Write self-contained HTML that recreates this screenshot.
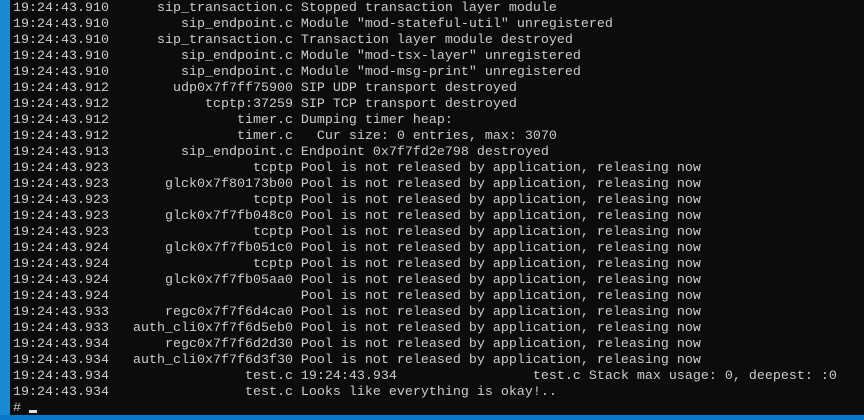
<!DOCTYPE html>
<html><head><meta charset="utf-8"><style>
html,body{margin:0;padding:0;background:#0c0c0c;width:864px;height:420px;overflow:hidden;position:relative}
pre{position:absolute;left:13px;top:1px;margin:0;font-family:"Liberation Mono",monospace;font-size:13.33px;line-height:16px;color:#cccccc;white-space:pre}
.l{position:absolute;left:0;top:0;width:10px;height:420px;background:#1a8ad4}
.b{position:absolute;left:0;top:415px;width:864px;height:5px;background:#0a78c8}
.c{position:absolute;left:29px;top:410px;width:8px;height:3px;background:#e0e0e0}
</style></head><body>
<div class="l"></div>
<pre>19:24:43.910      sip_transaction.c Stopped transaction layer module
19:24:43.910         sip_endpoint.c Module "mod-stateful-util" unregistered
19:24:43.910      sip_transaction.c Transaction layer module destroyed
19:24:43.910         sip_endpoint.c Module "mod-tsx-layer" unregistered
19:24:43.910         sip_endpoint.c Module "mod-msg-print" unregistered
19:24:43.912        udp0x7f7ff75900 SIP UDP transport destroyed
19:24:43.912            tcptp:37259 SIP TCP transport destroyed
19:24:43.912                timer.c Dumping timer heap:
19:24:43.912                timer.c   Cur size: 0 entries, max: 3070
19:24:43.913         sip_endpoint.c Endpoint 0x7f7fd2e798 destroyed
19:24:43.923                  tcptp Pool is not released by application, releasing now
19:24:43.923       glck0x7f80173b00 Pool is not released by application, releasing now
19:24:43.923                  tcptp Pool is not released by application, releasing now
19:24:43.923       glck0x7f7fb048c0 Pool is not released by application, releasing now
19:24:43.923                  tcptp Pool is not released by application, releasing now
19:24:43.924       glck0x7f7fb051c0 Pool is not released by application, releasing now
19:24:43.924                  tcptp Pool is not released by application, releasing now
19:24:43.924       glck0x7f7fb05aa0 Pool is not released by application, releasing now
19:24:43.924                        Pool is not released by application, releasing now
19:24:43.933       regc0x7f7f6d4ca0 Pool is not released by application, releasing now
19:24:43.933   auth_cli0x7f7f6d5eb0 Pool is not released by application, releasing now
19:24:43.934       regc0x7f7f6d2d30 Pool is not released by application, releasing now
19:24:43.934   auth_cli0x7f7f6d3f30 Pool is not released by application, releasing now
19:24:43.934                 test.c 19:24:43.934                 test.c Stack max usage: 0, deepest: :0
19:24:43.934                 test.c Looks like everything is okay!..
# </pre>
<div class="c"></div>
<div class="b"></div>
</body></html>
